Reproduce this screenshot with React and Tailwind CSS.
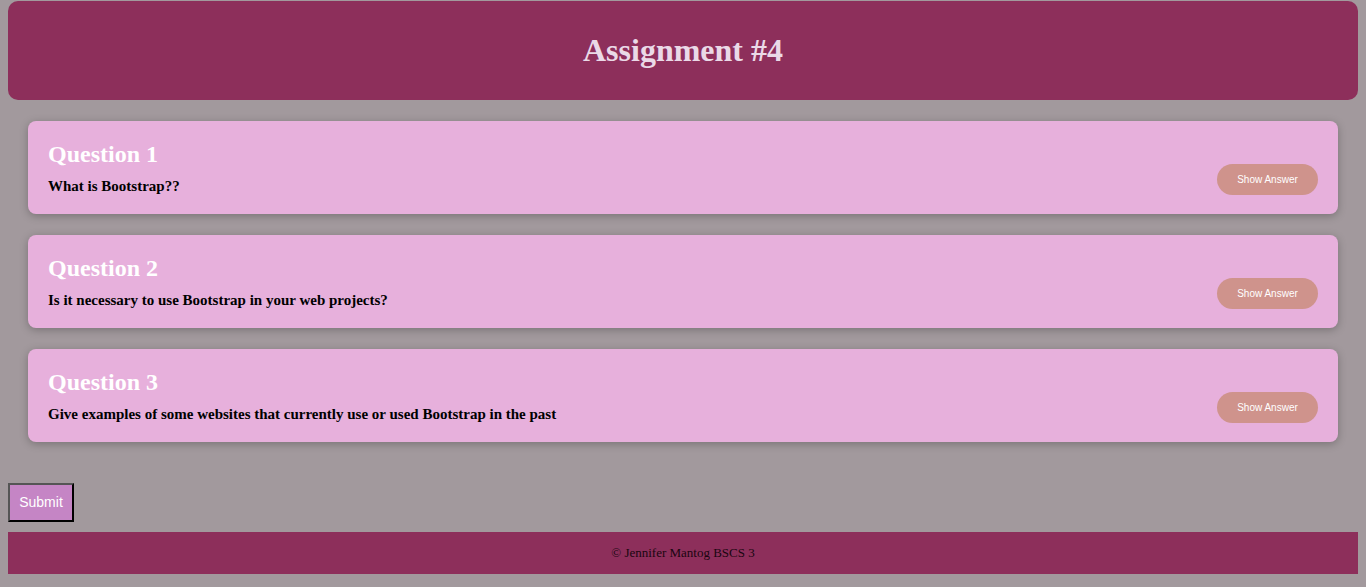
export default function App() {
  const qs = [
    ["Question 1", "What is Bootstrap??"],
    ["Question 2", "Is it necessary to use Bootstrap in your web projects?"],
    ["Question 3", "Give examples of some websites that currently use or used Bootstrap in the past"],
  ];
  return (
    <div className="min-h-[587px] bg-[#a2999d] px-2 pt-px pb-[13px]" style={{ fontFamily: '"Liberation Serif", serif' }}>
      <header className="h-[99px] rounded-[10px] bg-[#8d2f5b] flex items-center justify-center">
        <h1 className="text-[32px] leading-[36px] font-bold text-[#ead9e7] -mt-px">Assignment #4</h1>
      </header>
      <div className="mt-[21px] px-5 flex flex-col gap-[21px]">
        {qs.map(([t, q]) => (
          <div key={t} className="rounded-[8px] bg-[#e7b0dc] shadow-[0_2px_8px_rgba(0,0,0,0.25)] px-5 pt-5 pb-[19px] flex items-end justify-between">
            <div>
              <h2 className="text-[24px] leading-[27px] font-bold text-white">{t}</h2>
              <p className="mt-[10px] text-[15px] leading-[17px] font-bold text-black">{q}</p>
            </div>
            <button className="h-[31px] w-[101px] rounded-full bg-[#cf938c] text-white text-[10px]" style={{ fontFamily: '"Liberation Sans", Arial, sans-serif' }}>
              Show Answer
            </button>
          </div>
        ))}
      </div>
      <button
        className="mt-[41px] block h-[39px] w-[66px] bg-[#c585c5] text-white text-[14px] border-2 border-t-[#555] border-l-[#555] border-r-black border-b-black"
        style={{ fontFamily: '"Liberation Sans", Arial, sans-serif' }}
      >
        Submit
      </button>
      <footer className="mt-[10px] h-[42px] bg-[#8d2f5b] flex items-center justify-center text-[13px] text-[#1a0610]">
        © Jennifer Mantog BSCS 3
      </footer>
    </div>
  );
}
